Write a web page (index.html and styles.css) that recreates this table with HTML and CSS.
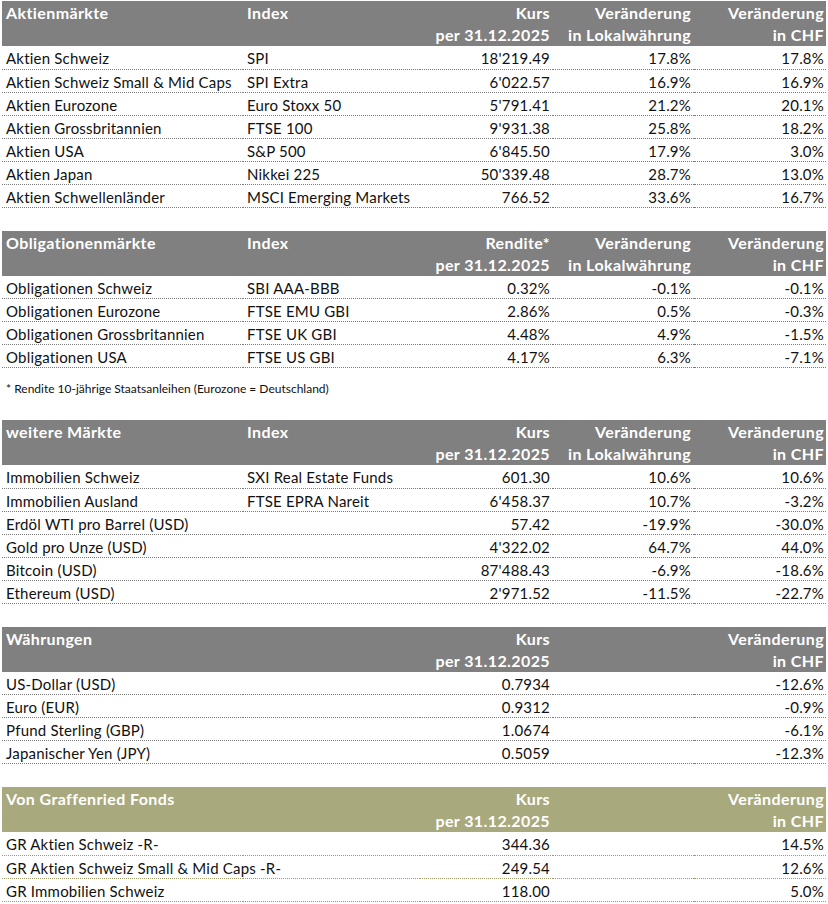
FILE: index.html
```html
<!DOCTYPE html>
<html lang="de">
<head>
<meta charset="utf-8">
<title>Marktübersicht</title>
<link rel="stylesheet" href="styles.css">
</head>
<body>
<div class="page">

<table class="mt">
  <colgroup><col class="c1"><col class="c2"><col class="c3"><col class="c4"><col class="c5"></colgroup>
  <thead>
    <tr><th class="l">Aktienmärkte</th><th class="l">Index</th><th>Kurs<br>per 31.12.2025</th><th>Veränderung<br>in Lokalwährung</th><th>Veränderung<br>in CHF</th></tr>
  </thead>
  <tbody>
    <tr><td class="l">Aktien Schweiz</td><td class="l">SPI</td><td>18'219.49</td><td>17.8%</td><td>17.8%</td></tr>
    <tr><td class="l">Aktien Schweiz Small &amp; Mid Caps</td><td class="l">SPI Extra</td><td>6'022.57</td><td>16.9%</td><td>16.9%</td></tr>
    <tr><td class="l">Aktien Eurozone</td><td class="l">Euro Stoxx 50</td><td>5'791.41</td><td>21.2%</td><td>20.1%</td></tr>
    <tr><td class="l">Aktien Grossbritannien</td><td class="l">FTSE 100</td><td>9'931.38</td><td>25.8%</td><td>18.2%</td></tr>
    <tr><td class="l">Aktien USA</td><td class="l">S&amp;P 500</td><td>6'845.50</td><td>17.9%</td><td>3.0%</td></tr>
    <tr><td class="l">Aktien Japan</td><td class="l">Nikkei 225</td><td>50'339.48</td><td>28.7%</td><td>13.0%</td></tr>
    <tr><td class="l">Aktien Schwellenländer</td><td class="l">MSCI Emerging Markets</td><td>766.52</td><td>33.6%</td><td>16.7%</td></tr>
  </tbody>
</table>

<table class="mt">
  <colgroup><col class="c1"><col class="c2"><col class="c3"><col class="c4"><col class="c5"></colgroup>
  <thead>
    <tr><th class="l">Obligationenmärkte</th><th class="l">Index</th><th>Rendite*<br>per 31.12.2025</th><th>Veränderung<br>in Lokalwährung</th><th>Veränderung<br>in CHF</th></tr>
  </thead>
  <tbody>
    <tr><td class="l">Obligationen Schweiz</td><td class="l">SBI AAA-BBB</td><td>0.32%</td><td>-0.1%</td><td>-0.1%</td></tr>
    <tr><td class="l">Obligationen Eurozone</td><td class="l">FTSE EMU GBI</td><td>2.86%</td><td>0.5%</td><td>-0.3%</td></tr>
    <tr><td class="l">Obligationen Grossbritannien</td><td class="l">FTSE UK GBI</td><td>4.48%</td><td>4.9%</td><td>-1.5%</td></tr>
    <tr><td class="l">Obligationen USA</td><td class="l">FTSE US GBI</td><td>4.17%</td><td>6.3%</td><td>-7.1%</td></tr>
  </tbody>
</table>
<p class="note">* Rendite 10-jährige Staatsanleihen (Eurozone = Deutschland)</p>

<table class="mt">
  <colgroup><col class="c1"><col class="c2"><col class="c3"><col class="c4"><col class="c5"></colgroup>
  <thead>
    <tr><th class="l">weitere Märkte</th><th class="l">Index</th><th>Kurs<br>per 31.12.2025</th><th>Veränderung<br>in Lokalwährung</th><th>Veränderung<br>in CHF</th></tr>
  </thead>
  <tbody>
    <tr><td class="l">Immobilien Schweiz</td><td class="l">SXI Real Estate Funds</td><td>601.30</td><td>10.6%</td><td>10.6%</td></tr>
    <tr><td class="l">Immobilien Ausland</td><td class="l">FTSE EPRA Nareit</td><td>6'458.37</td><td>10.7%</td><td>-3.2%</td></tr>
    <tr><td class="l">Erdöl WTI pro Barrel (USD)</td><td class="l"></td><td>57.42</td><td>-19.9%</td><td>-30.0%</td></tr>
    <tr><td class="l">Gold pro Unze (USD)</td><td class="l"></td><td>4'322.02</td><td>64.7%</td><td>44.0%</td></tr>
    <tr><td class="l">Bitcoin (USD)</td><td class="l"></td><td>87'488.43</td><td>-6.9%</td><td>-18.6%</td></tr>
    <tr><td class="l">Ethereum (USD)</td><td class="l"></td><td>2'971.52</td><td>-11.5%</td><td>-22.7%</td></tr>
  </tbody>
</table>

<table class="mt">
  <colgroup><col class="c1"><col class="c2"><col class="c3"><col class="c4"><col class="c5"></colgroup>
  <thead>
    <tr><th class="l">Währungen</th><th class="l"></th><th>Kurs<br>per 31.12.2025</th><th></th><th>Veränderung<br>in CHF</th></tr>
  </thead>
  <tbody>
    <tr><td class="l">US-Dollar (USD)</td><td class="l"></td><td>0.7934</td><td></td><td>-12.6%</td></tr>
    <tr><td class="l">Euro (EUR)</td><td class="l"></td><td>0.9312</td><td></td><td>-0.9%</td></tr>
    <tr><td class="l">Pfund Sterling (GBP)</td><td class="l"></td><td>1.0674</td><td></td><td>-6.1%</td></tr>
    <tr><td class="l">Japanischer Yen (JPY)</td><td class="l"></td><td>0.5059</td><td></td><td>-12.3%</td></tr>
  </tbody>
</table>

<table class="mt olive">
  <colgroup><col class="c1"><col class="c2"><col class="c3"><col class="c4"><col class="c5"></colgroup>
  <thead>
    <tr><th class="l">Von Graffenried Fonds</th><th class="l"></th><th>Kurs<br>per 31.12.2025</th><th></th><th>Veränderung<br>in CHF</th></tr>
  </thead>
  <tbody>
    <tr><td class="l">GR Aktien Schweiz -R-</td><td class="l"></td><td>344.36</td><td></td><td>14.5%</td></tr>
    <tr><td class="l">GR Aktien Schweiz Small &amp; Mid Caps -R-</td><td class="l"></td><td>249.54</td><td></td><td>12.6%</td></tr>
    <tr><td class="l">GR Immobilien Schweiz</td><td class="l"></td><td>118.00</td><td></td><td>5.0%</td></tr>
  </tbody>
</table>

</div>
</body>
</html>
```

FILE: styles.css
```css
html, body {
  margin: 0;
  padding: 0;
  background: #ffffff;
}

.page {
  padding: 1px 0 0 2px;
  width: 824px;
  font-family: Lato, "Open Sans", "Liberation Sans", sans-serif;
  color: #111111;
}

.mt {
  width: 824px;
  table-layout: fixed;
  border-collapse: collapse;
  border-spacing: 0;
  margin: 0 0 23px 0;
}

.c1 { width: 241px; }
.c2 { width: 177px; }
.c3 { width: 133px; }
.c4 { width: 141px; }
.c5 { width: 132px; }

.mt th {
  background: #808080;
  color: #ffffff;
  font-weight: bold;
  font-size: 16px;
  letter-spacing: 0.4px;
  line-height: 22px;
  height: 45px;
  box-sizing: border-box;
  padding: 1px 3px 0 4px;
  text-align: right;
  vertical-align: top;
  white-space: nowrap;
}

.mt th:last-child { padding-right: 2px; }

.mt td {
  font-size: 15px;
  letter-spacing: 0.2px;
  line-height: 20px;
  height: 23px;
  box-sizing: border-box;
  padding: 2px 3px 0 4px;
  text-align: right;
  vertical-align: top;
  white-space: nowrap;
  overflow: visible;
  border-bottom: 1px dotted #7a7a7a;
}

.mt td:last-child { padding-right: 2px; }

.mt .l { text-align: left; }

.olive th { background: #a9a97e; }
.olive td { border-bottom-color: #9c9c6a; }

.note {
  margin: -23px 0 0 0;
  height: 52px;
  box-sizing: border-box;
  padding: 13px 0 0 4px;
  font-size: 12px;
  line-height: 16px;
  color: #111111;
}
```
